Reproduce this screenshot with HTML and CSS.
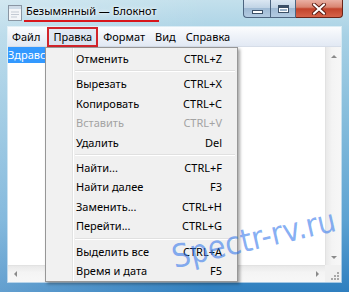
FILE: index.html
```html
<!DOCTYPE html>
<html lang="ru">
<head>
<meta charset="utf-8">
<title>Безымянный — Блокнот</title>
<link rel="stylesheet" href="styles.css">
</head>
<body>
<div class="window">
  <div class="titlebar">
    <svg class="app-icon" width="14" height="16" viewBox="0 0 14 16">
      <rect x="0.5" y="0.5" width="13" height="15" fill="#f4f6f8" stroke="#8a96a3"/>
      <rect x="1" y="1" width="12" height="3" fill="#cfdce8"/>
      <path d="M3 7h8M3 9.5h8M3 12h6" stroke="#c3cad3" stroke-width="1"/>
    </svg>
    <div class="title">Безымянный — Блокнот</div>
    <div class="caption">
      <div class="cbtn min"><span class="min-glyph"></span></div>
      <div class="cbtn max"><span class="max-glyph"></span></div>
      <div class="cbtn close">
        <svg width="16" height="12" viewBox="0 0 16 12">
          <path d="M3 1.5l10 9M13 1.5l-10 9" stroke="#5a1b12" stroke-width="4" stroke-linecap="round"/>
          <path d="M3 1.5l10 9M13 1.5l-10 9" stroke="#ffffff" stroke-width="2.2" stroke-linecap="round"/>
        </svg>
      </div>
    </div>
  </div>
  <div class="client">
    <div class="menubar">
      <span class="mitem">Файл</span>
      <span class="mitem active">Правка</span>
      <span class="mitem">Формат</span>
      <span class="mitem">Вид</span>
      <span class="mitem">Справка</span>
    </div>
    <div class="main">
      <div class="edit"><span class="sel">Здравствуйте</span></div>
      <div class="vscroll">
        <span class="arrow up"></span>
        <span class="arrow down"></span>
      </div>
    </div>
    <div class="bottom">
      <div class="hscroll">
        <span class="arrow left"></span>
        <span class="arrow right"></span>
      </div>
      <div class="grip">
        <svg width="10" height="10" viewBox="0 0 10 10">
          <g fill="#a8a8a8">
            <rect x="7" y="1" width="2" height="2"/>
            <rect x="4" y="4" width="2" height="2"/><rect x="7" y="4" width="2" height="2"/>
            <rect x="1" y="7" width="2" height="2"/><rect x="4" y="7" width="2" height="2"/><rect x="7" y="7" width="2" height="2"/>
          </g>
        </svg>
      </div>
    </div>
  </div>

  <div class="dropdown">
    <div class="ditem"><span>Отменить</span><span class="key">CTRL+Z</span></div>
    <div class="dsep"></div>
    <div class="ditem"><span>Вырезать</span><span class="key">CTRL+X</span></div>
    <div class="ditem"><span>Копировать</span><span class="key">CTRL+C</span></div>
    <div class="ditem disabled"><span>Вставить</span><span class="key">CTRL+V</span></div>
    <div class="ditem"><span>Удалить</span><span class="key">Del</span></div>
    <div class="dsep"></div>
    <div class="ditem"><span>Найти...</span><span class="key">CTRL+F</span></div>
    <div class="ditem"><span>Найти далее</span><span class="key">F3</span></div>
    <div class="ditem"><span>Заменить...</span><span class="key">CTRL+H</span></div>
    <div class="ditem"><span>Перейти...</span><span class="key">CTRL+G</span></div>
    <div class="dsep"></div>
    <div class="ditem"><span>Выделить все</span><span class="key">CTRL+A</span></div>
    <div class="ditem"><span>Время и дата</span><span class="key">F5</span></div>
  </div>

  <div class="watermark">Spectr-rv.ru</div>
</div>
</body>
</html>
```

FILE: styles.css
```css
* { box-sizing: border-box; }

html, body {
  margin: 0;
  padding: 0;
  width: 349px;
  height: 292px;
  overflow: hidden;
  background: #ffffff;
}

.window {
  position: relative;
  width: 349px;
  height: 292px;
  display: flex;
  flex-direction: column;
  font-family: "Noto Sans", "Open Sans", sans-serif;
  font-size: 11px;
  color: #000;
  background:
    linear-gradient(90deg, rgba(255,255,255,0.25) 0%, rgba(255,255,255,0) 60%),
    linear-gradient(180deg, #c3e0ec 0%, #a8d1e5 12%, #86bddc 40%, #5da3d2 75%, #2f7fbf 100%);
  overflow: hidden;
}

/* ---------- title bar ---------- */
.titlebar {
  height: 27px;
  display: flex;
  align-items: flex-start;
  padding-left: 8px;
  flex: none;
}

.app-icon {
  margin-top: 5px;
  flex: none;
}

.title {
  margin-left: 2px;
  margin-top: 3px;
  padding: 0 2px;
  height: 19px;
  line-height: 16px;
  font-size: 11px;
  color: #000;
  text-shadow: 0 0 6px #ffffff, 0 0 3px #ffffff;
  border-bottom: 2px solid #d8161b;
  white-space: nowrap;
}

.caption {
  margin-left: auto;
  margin-right: 6px;
  display: flex;
  height: 18px;
}

.cbtn {
  height: 18px;
  display: flex;
  align-items: center;
  justify-content: center;
  border: 1px solid #4d6580;
  border-top: none;
}

.cbtn.min {
  width: 27px;
  border-radius: 0 0 0 4px;
  border-right: none;
  background: linear-gradient(180deg, #dbe7f2 0%, #c1d4e6 45%, #9fbad4 50%, #b3cbe2 100%);
}

.cbtn.max {
  width: 26px;
  background: linear-gradient(180deg, #dbe7f2 0%, #c1d4e6 45%, #9fbad4 50%, #b3cbe2 100%);
}

.cbtn.close {
  width: 47px;
  border-left: none;
  border-color: #6a2418;
  border-radius: 0 0 4px 0;
  background: linear-gradient(180deg, #eab0a3 0%, #d98571 42%, #c2432b 52%, #d6634a 100%);
}

.min-glyph {
  width: 11px;
  height: 4px;
  margin-top: 7px;
  background: #ffffff;
  border: 1px solid #3b4f66;
}

.max-glyph {
  width: 11px;
  height: 8px;
  background: #9ab2c9;
  border: 1px solid #3b4f66;
  border-top-width: 3px;
  box-shadow: inset 0 0 0 1px #ffffff;
}

/* ---------- client area ---------- */
.client {
  flex: 1;
  margin: 0 8px 10px 8px;
  display: flex;
  flex-direction: column;
  background: #ffffff;
  box-shadow: 0 0 0 1px rgba(255,255,255,0.55);
}

.menubar {
  height: 20px;
  flex: none;
  display: flex;
  align-items: stretch;
  background: linear-gradient(180deg, #fbfcfe 0%, #eef2f8 50%, #e2e9f4 100%);
  border-bottom: 1px solid #d6dde8;
}

.mitem {
  padding: 0 5px;
  line-height: 19px;
  white-space: nowrap;
}

.mitem:first-child {
  padding-left: 4px;
  margin-right: 2px;
}

.mitem.active {
  padding: 0 6px;
  margin-right: 0;
  background: linear-gradient(180deg, #e4ebf5 0%, #d8e2ef 100%);
  box-shadow: inset 0 0 0 2px #d2242b;
  height: 20px;
}

.main {
  flex: 1;
  display: flex;
  min-height: 0;
}

.edit {
  flex: 1;
  padding: 1px 0 0 0;
  line-height: 13px;
  font-size: 11px;
  background: #ffffff;
}

.sel {
  background: #3399ff;
  color: #ffffff;
  padding-bottom: 1px;
}

.vscroll {
  width: 16px;
  flex: none;
  display: flex;
  flex-direction: column;
  justify-content: space-between;
  align-items: center;
  padding: 8px 0 6px;
  background: linear-gradient(90deg, #e9e9e9 0%, #f4f4f4 40%, #f7f7f7 100%);
  border-left: 1px solid #e2e2e2;
}

.bottom {
  height: 17px;
  flex: none;
  display: flex;
}

.hscroll {
  flex: 1;
  display: flex;
  align-items: center;
  justify-content: space-between;
  padding: 0 6px;
  background: linear-gradient(180deg, #e9e9e9 0%, #f4f4f4 40%, #f7f7f7 100%);
  border-top: 1px solid #e2e2e2;
}

.grip {
  width: 16px;
  flex: none;
  background: #f0f0f0;
  display: flex;
  align-items: flex-end;
  justify-content: flex-end;
  padding: 0 1px 1px 0;
}

.arrow {
  width: 0;
  height: 0;
  display: block;
}
.arrow.up    { border-left: 3px solid transparent; border-right: 3px solid transparent; border-bottom: 3px solid #8a8a8a; }
.arrow.down  { border-left: 3px solid transparent; border-right: 3px solid transparent; border-top: 3px solid #8a8a8a; }
.arrow.left  { border-top: 3px solid transparent; border-bottom: 3px solid transparent; border-right: 3px solid #8a8a8a; }
.arrow.right { border-top: 3px solid transparent; border-bottom: 3px solid transparent; border-left: 3px solid #8a8a8a; }

/* ---------- dropdown menu ---------- */
.dropdown {
  position: absolute;
  left: 45px;
  top: 47px;
  width: 193px;
  padding: 1px 0 1px;
  background:
    linear-gradient(90deg, #f1f1f1 0, #f1f1f1 26px, #e2e3e3 26px, #e2e3e3 27px, #ffffff 27px, #ffffff 28px, #f0f0f0 28px);
  border: 1px solid #979797;
  box-shadow: 2px 2px 3px rgba(0,0,0,0.35);
  font-size: 11px;
}

.ditem {
  display: grid;
  grid-template-columns: 1fr auto;
  height: 19.4px;
  line-height: 19.4px;
  padding: 0 15px 0 30px;
  white-space: nowrap;
}

.ditem.disabled {
  color: #a3a3a3;
}

.key {
  text-align: right;
}

.dsep {
  height: 2px;
  margin: 2px 2px 2px 29px;
  border-top: 1px solid #e0e0e0;
  border-bottom: 1px solid #ffffff;
}

/* ---------- watermark ---------- */
.watermark {
  position: absolute;
  left: 176px;
  top: 240px;
  font-family: "DejaVu Sans Condensed", "Liberation Sans Narrow", "Liberation Sans", sans-serif;
  font-size: 32px;
  line-height: 34px;
  color: rgba(45, 115, 235, 0.58);
  transform: rotate(-13deg);
  transform-origin: left bottom;
  white-space: nowrap;
  pointer-events: none;
}
```
